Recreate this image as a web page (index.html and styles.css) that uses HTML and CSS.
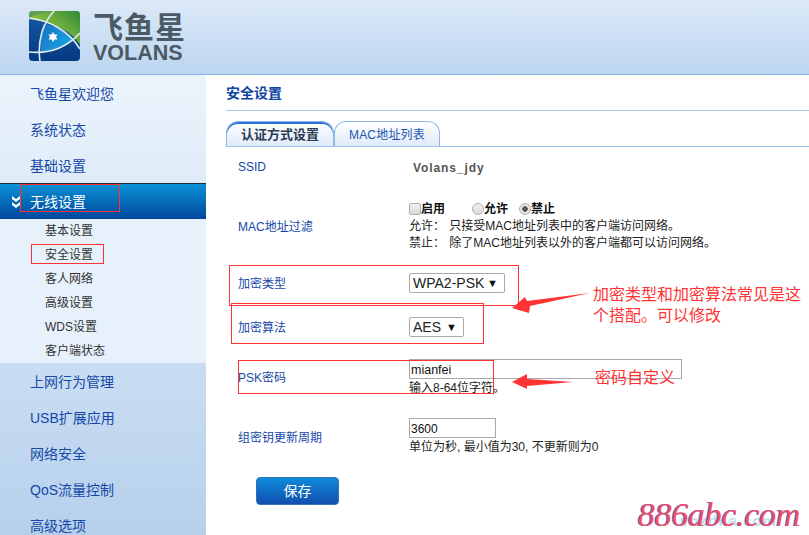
FILE: index.html
```html
<!DOCTYPE html>
<html lang="zh-CN">
<head>
<meta charset="utf-8">
<title>飞鱼星 VOLANS</title>
<link rel="stylesheet" href="styles.css">
</head>
<body>
<div class="page">
  <header class="header">
    <svg class="logo-mark" width="51" height="50" viewBox="0 0 51 50">
      <defs>
        <clipPath id="lc"><rect width="51" height="50" rx="4"/></clipPath>
        <linearGradient id="lb" x1="0" y1="0" x2="0" y2="1"><stop offset="0" stop-color="#1659a8"/><stop offset="1" stop-color="#053a80"/></linearGradient>
        <linearGradient id="lg" x1="1" y1="0" x2="0.2" y2="0.6"><stop offset="0" stop-color="#2f8a3a"/><stop offset="1" stop-color="#9cc83c"/></linearGradient>
        <linearGradient id="le" x1="0" y1="0" x2="1" y2="0.6"><stop offset="0" stop-color="#1a6fc0"/><stop offset="1" stop-color="#16a4e4"/></linearGradient>
      </defs>
      <g clip-path="url(#lc)">
        <rect width="51" height="50" fill="url(#lb)"/>
        <path d="M0 0H51V34C44 22 30 13 0 8Z" fill="url(#lg)"/>
        <path d="M0 0H24C14 2 4 4 0 8Z" fill="#5f9e55"/>
        <path d="M14 13C28 14 40 22 44 28C36 36 24 41 12 41C10 30 11 21 14 13Z" fill="url(#le)"/>
        <path d="M0 7C20 9 40 20 51 38" fill="none" stroke="#dfe8f0" stroke-width="1.6"/>
        <path d="M25 0C14 12 8 30 11 50" fill="none" stroke="#dfe8f0" stroke-width="1.6"/>
        <path d="M0 41C20 43 38 36 51 22" fill="none" stroke="#dfe8f0" stroke-width="1.6"/>
        <path d="M24 21l1.5 2.500h3l-1.500 2.500 1.500 2.500h-3l-1.500 2.500-1.500-2.500h-3l1.500-2.500-1.500-2.500h3z" fill="#fff"/>
      </g>
    </svg>
    <div class="logo-text">
      <span class="logo-cn">飞鱼星</span>
      <span class="logo-en">VOLANS</span>
    </div>
  </header>
  <div class="body">
    <aside class="side">
      <a class="nav">飞鱼星欢迎您</a>
      <a class="nav">系统状态</a>
      <a class="nav">基础设置</a>
      <a class="nav active">
        <svg class="chev" width="10" height="14" viewBox="0 0 10 14"><path d="M1 1l4 3 4-3v3L5 7 1 4zM1 7l4 3 4-3v3l-4 3-4-3z" fill="#fff"/></svg>
        无线设置
      </a>
      <ul class="sub">
        <li>基本设置</li>
        <li>安全设置</li>
        <li>客人网络</li>
        <li>高级设置</li>
        <li>WDS设置</li>
        <li>客户端状态</li>
      </ul>
      <a class="nav">上网行为管理</a>
      <a class="nav">USB扩展应用</a>
      <a class="nav">网络安全</a>
      <a class="nav">QoS流量控制</a>
      <a class="nav">高级选项</a>
    </aside>
    <main class="main">
      <h1 class="title">安全设置</h1>
      <div class="tabs">
        <div class="tab on">认证方式设置</div>
        <div class="tab">MAC地址列表</div>
      </div>
      <form class="form">
        <div class="lbl">SSID</div>
        <div class="ssid">Volans_jdy</div>

        <div class="lbl">MAC地址过滤</div>
        <div class="val">
          <div class="choices">
            <input class="box" type="checkbox"><b class="c1">启用</b>
            <input class="rad" type="radio" name="m"><b class="c2">允许</b>
            <input class="rad" type="radio" name="m" checked><b>禁止</b>
          </div>
          <div class="rule">允许： 只接受MAC地址列表中的客户端访问网络。</div>
          <div class="rule">禁止： 除了MAC地址列表以外的客户端都可以访问网络。</div>
        </div>

        <div class="lbl">加密类型</div>
        <div class="val"><span class="sel w1">WPA2-PSK<i>▼</i></span></div>

        <div class="lbl">加密算法</div>
        <div class="val"><span class="sel w2">AES<i>▼</i></span></div>

        <div class="lbl">PSK密码</div>
        <div class="val shift">
          <input class="text wide" type="text" value="mianfei">
          <div class="hint">输入8-64位字符。</div>
        </div>

        <div class="lbl">组密钥更新周期</div>
        <div class="val">
          <input class="text short" type="text" value="3600">
          <div class="hint">单位为秒, 最小值为30, 不更新则为0</div>
        </div>
      </form>
      <button class="save" type="button">保存</button>
    </main>
  </div>

  <div class="mark m1"></div>
  <div class="mark m2"></div>
  <div class="mark m3"></div>
  <div class="mark m4"></div>
  <div class="mark m5"></div>
  <svg class="arrows" width="809" height="535" viewBox="0 0 809 535">
    <polygon points="512,308 525,297 527,301 590,293 530,306 529,313" fill="#f33"/>
    <polygon points="512,382 527,374 527,379 573,382 527,386 527,389" fill="#f33"/>
  </svg>
  <div class="note n1">加密类型和加密算法常见是这<br>个搭配。可以修改</div>
  <div class="note n2">密码自定义</div>
  <div class="wm-back">vozdila.com</div>
  <div class="wm">886abc.com</div>
</div>
</body>
</html>
```
FILE: styles.css
```css
* { box-sizing: border-box; }
html, body { margin: 0; height: 100%; overflow: hidden; background: #fff; }
body { font-family: "Liberation Sans", "Noto Sans CJK SC", sans-serif; font-size: 12px; color: #333; }
.page { position: relative; width: 809px; height: 535px; overflow: hidden; }

.header {
  height: 75px; display: flex; align-items: flex-start; gap: 13px; padding: 11px 0 0 29px;
  background: linear-gradient(#dce9f8, #bcd5f0);
  border-bottom: 1px solid #86b4e8;
}
.logo-text { display: flex; flex-direction: column; color: #4a5a64; font-weight: 700; margin-top: -2px; }
.logo-cn { font-family: "Noto Sans CJK SC", sans-serif; font-size: 30px; line-height: 33px; letter-spacing: 1px; }
.logo-en { font-family: "Liberation Sans", sans-serif; font-size: 21.500px; line-height: 23px; }

.body { display: flex; height: 460px; }
.side {
  width: 206px; flex: none; padding-top: 1px; overflow: hidden;
  background: linear-gradient(#ebf4fc, #b6d0ec);
}
.nav {
  display: flex; align-items: center; height: 36px; padding: 0 0 2px 30px;
  font-size: 14px; color: #1648a8; font-family: "Liberation Sans", "Noto Sans CJK SC", sans-serif;
}
.nav.active {
  position: relative; margin-top: -1px; color: #fff;
  border-top: 1px solid #1f2a35;
  background: linear-gradient(#0a90d4, #00479c);
}
.chev { position: absolute; left: 11px; top: 11px; }
.sub { list-style: none; margin: 0 0 1px; padding: 0; background: #e7f1fb; }
.sub li { height: 24px; line-height: 24px; padding-left: 45px; font-size: 12px; color: #333; }

.main { flex: 1; padding-left: 20px; min-width: 0; }
.title {
  margin: 0; height: 36px; line-height: 35px; font-size: 14px; font-weight: 700; color: #0e45a0;
  font-family: "Noto Sans CJK SC", sans-serif; border-bottom: 1px solid #a9c8ee;
}
.tabs { display: flex; margin-top: 10px; height: 26px; border-bottom: 1px solid #9cc0ec; }
.tab {
  height: 25px; width: 106px; border: 1px solid #8fb8e8; border-bottom: 0; border-radius: 12px 12px 0 0;
  background: linear-gradient(#fff, #dfeafa);
  text-align: center; line-height: 26px; font-size: 12px; color: #1c56b0; letter-spacing: .2px;
}
.tab.on { width: 108px; font-size: 13px; letter-spacing: 0; font-weight: 700; color: #2b3a55; box-shadow: inset 0 2px 0 #2b6fd4; }

.form {
  display: grid; grid-template-columns: 171px 1fr;
  grid-template-rows: 42px 74px 40px 48px 52px 68px;
  padding-left: 12px; align-items: center;
}
.lbl { color: #1648a8; font-size: 12px; padding-bottom: 2px; }
.ssid { padding-left: 4px; font-weight: 700; font-size: 12px; color: #555; letter-spacing: .9px; }
.val { font-size: 12px; color: #222; line-height: 17px; }
.shift { margin-top: 2px; }
.choices { display: flex; align-items: center; height: 18px; color: #111; }
.choices b { font-size: 12px; }
.rule { word-spacing: 1px; }
.box, .rad {
  appearance: none; margin: 0; width: 12px; height: 12px; flex: none;
  background: linear-gradient(#f2f2f2, #d8d8d8); border: 1px solid #b0b0b0;
}
.box { border-radius: 2px; }
.rad { border-radius: 50%; }
.rad:checked { background: radial-gradient(circle, #555 0 2.500px, #e4e4e4 3px); }
.c1 { margin-right: 27px; }
.c2 { margin-right: 11px; }
.sel {
  display: inline-flex; align-items: center; justify-content: space-between; height: 20px; padding: 0 6px 0 3px;
  border: 1px solid #a9a9a9; border-radius: 2px; background: #fff; font-size: 14px; color: #222;
}
.sel i { font-style: normal; font-size: 11px; color: #111; }
.w1 { width: 96px; }
.w2 { width: 55px; }
.text {
  display: block; height: 20px; margin: 0; padding: 1px 1px 0; border: 1px solid #a9a9a9; border-radius: 0;
  font: 12px/18px "Liberation Sans", sans-serif; color: #111; outline: 0; background: #fff;
}
.wide { width: 273px; font-size: 12.500px; }
.short { width: 87px; }
.hint { line-height: 18px; }
.save {
  display: block; margin: 6px 0 0 30px; width: 83px; height: 28px; padding: 0 0 3px;
  border: 1px solid #3470b8; border-radius: 4px; color: #fff; font-size: 14px;
  font-family: "Liberation Sans", "Noto Sans CJK SC", sans-serif;
  background: linear-gradient(#0f8adb, #114fae);
}

.mark { position: absolute; border: 1px solid #f33; }
.m1 { left: 20px; top: 184px; width: 100px; height: 28px; }
.m2 { left: 31px; top: 244px; width: 73px; height: 20px; }
.m3 { left: 229px; top: 265px; width: 290px; height: 41px; }
.m4 { left: 231px; top: 303px; width: 253px; height: 41px; }
.m5 { left: 238px; top: 360px; width: 256px; height: 34px; }
.arrows { position: absolute; left: 0; top: 0; }
.note { position: absolute; color: #f33; font-size: 16px; line-height: 21px; font-family: "Noto Sans CJK SC", sans-serif; }
.n1 { left: 593px; top: 283px; }
.n2 { left: 595px; top: 366px; }
.wm {
  position: absolute; left: 638px; top: 495px; font: italic 34px/40px "Liberation Serif", serif; letter-spacing: -.3px;
  color: #f2505f; text-shadow: -1px 0 0 #5a6ae8;
}
.wm-back {
  position: absolute; left: 680px; top: 512px; font: 700 15px/18px "Liberation Sans", sans-serif;
  color: #bfe0ea; letter-spacing: 1px;
}
```
